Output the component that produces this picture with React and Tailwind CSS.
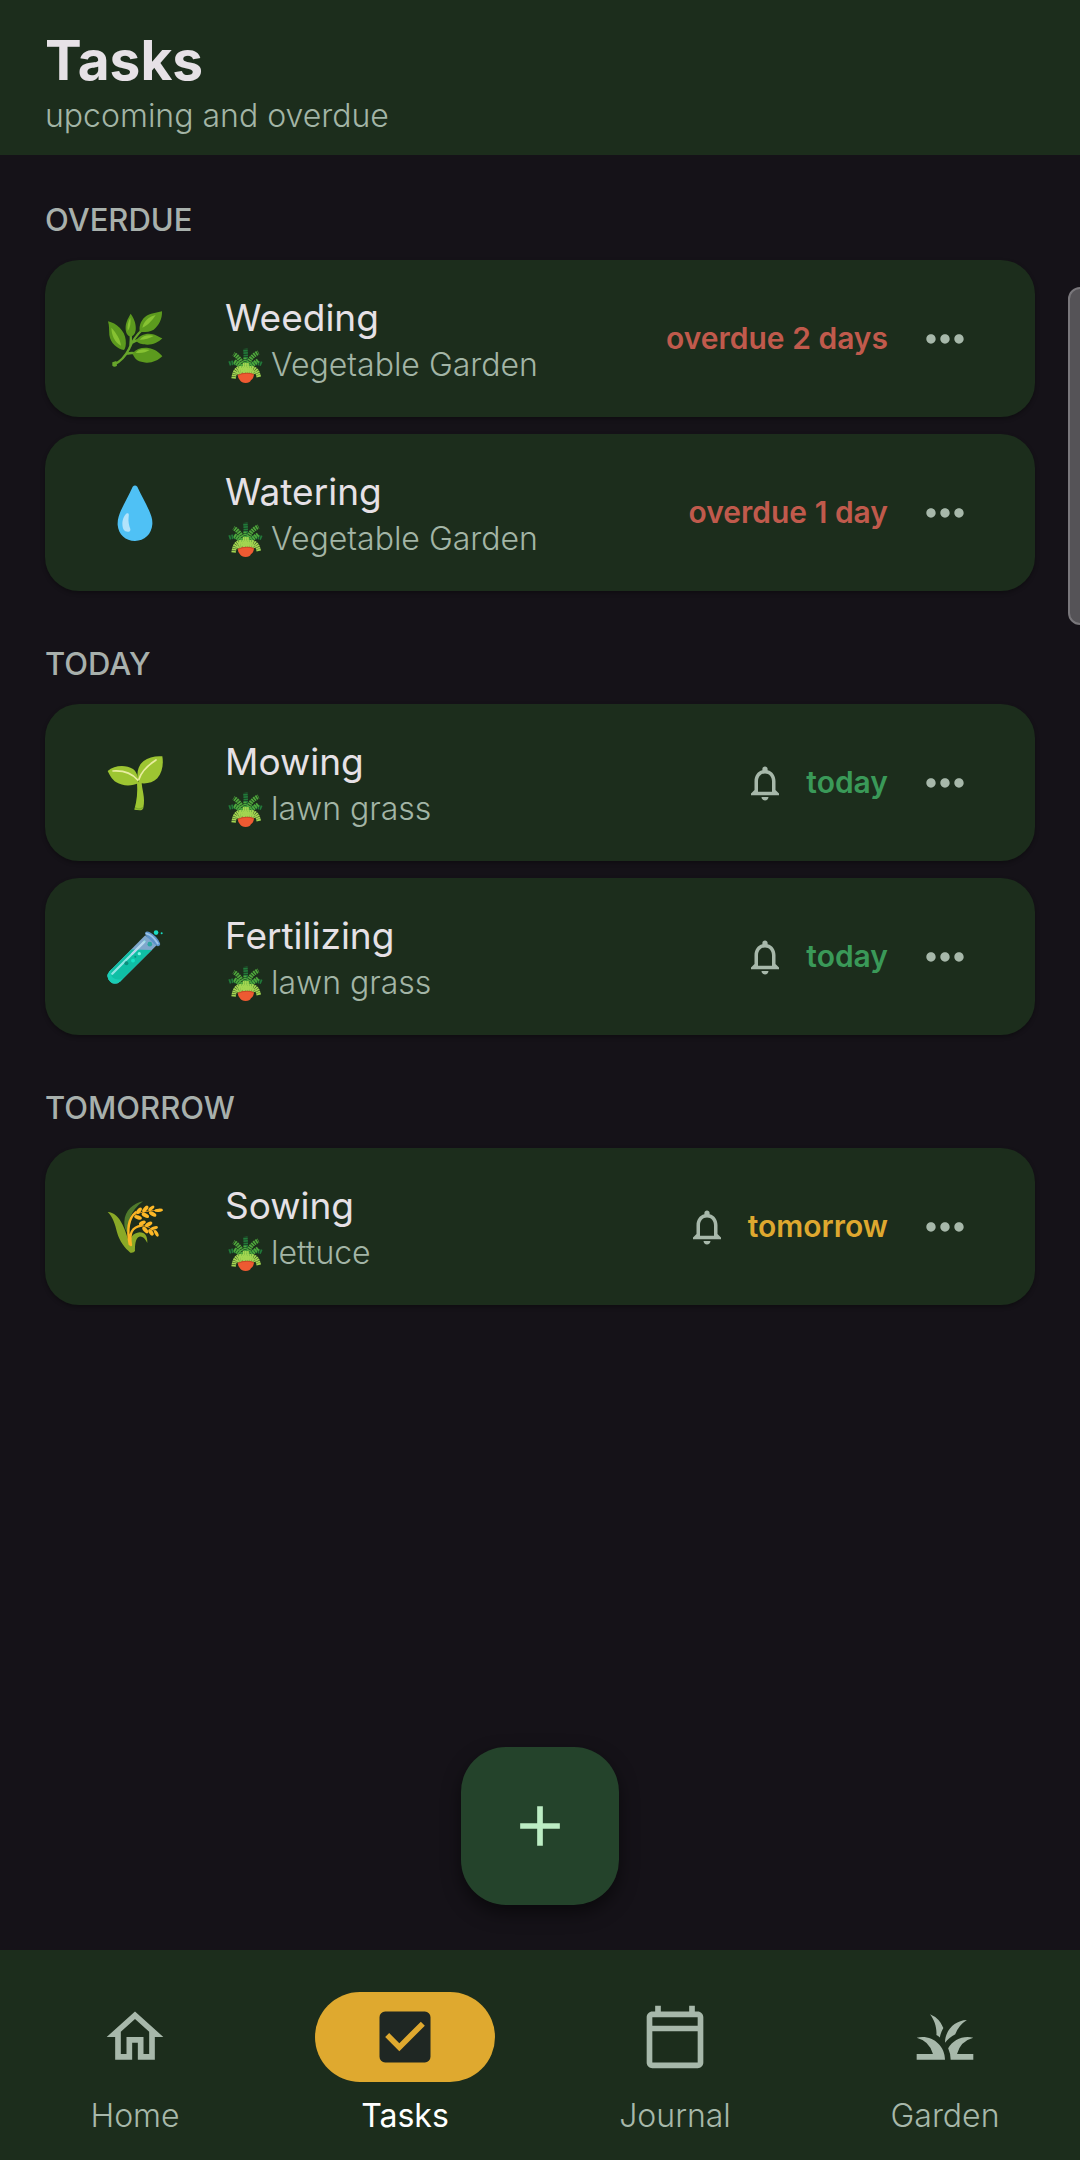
import React, { useState } from "react";
import {
  MdAdd,
  MdCheckBox,
  MdGrass,
  MdMoreHoriz,
  MdNotificationsNone,
  MdOutlineCalendarToday,
  MdOutlineHome,
} from "react-icons/md";

const sections = [
  {
    title: "OVERDUE",
    tasks: [
      { name: "Weeding", place: "Vegetable Garden", icon: "herb", due: "overdue 2 days", status: "overdue", reminder: false },
      { name: "Watering", place: "Vegetable Garden", icon: "drop", due: "overdue 1 day", status: "overdue", reminder: false },
    ],
  },
  {
    title: "TODAY",
    tasks: [
      { name: "Mowing", place: "lawn grass", icon: "sprout", due: "today", status: "today", reminder: true },
      { name: "Fertilizing", place: "lawn grass", icon: "tube", due: "today", status: "today", reminder: true },
    ],
  },
  {
    title: "TOMORROW",
    tasks: [
      { name: "Sowing", place: "lettuce", icon: "rice", due: "tomorrow", status: "tomorrow", reminder: true },
    ],
  },
];

const statusColors = {
  overdue: "text-[#c05a4c]",
  today: "text-[#3a9958]",
  tomorrow: "text-[#dea82f]",
};

const tabs = [
  { label: "Home", Icon: MdOutlineHome },
  { label: "Tasks", Icon: MdCheckBox },
  { label: "Journal", Icon: MdOutlineCalendarToday },
  { label: "Garden", Icon: MdGrass },
];

const HerbIcon = () => (
  <svg viewBox="50 34 168 168" className="size-14" aria-hidden="true">
    <path d="M72 194C94 184 106 168 116 148C126 124 138 106 158 88M112 162C122 158 132 160 142 162M128 128C138 122 144 120 150 118M120 140C122 124 122 112 121 100" fill="none" stroke="#67a52b" strokeWidth="7" strokeLinecap="round" />
    <path d="M66 188L78 184L80 198Q72 204 66 198Z" fill="#67a52b" />
    <path d="M53 65C78 70 104 94 106 120C108 136 105 146 101 151C82 148 60 132 57 106C56 90 57 78 53 65Z" fill="#5c9a1e" />
    <path d="M121 42C134 60 138 78 136 92C134 106 126 112 118 110C108 106 105 94 106 80C108 62 116 52 121 42Z" fill="#5c9a1e" />
    <path d="M215 35C216 58 206 78 190 90C176 98 162 97 149 97C145 84 150 64 164 52C180 40 198 40 215 35Z" fill="#5c9a1e" />
    <path d="M216 116C204 128 188 135 172 135C154 135 146 131 136 124C146 108 160 102 176 102C194 103 204 110 216 116Z" fill="#5c9a1e" />
    <path d="M216 170C204 182 186 190 168 189C146 188 132 180 127 161C138 148 154 143 174 145C194 148 206 158 216 170Z" fill="#5c9a1e" />
    <path d="M63 84C64 106 72 128 92 138C90 118 76 98 63 84Z" fill="#86c232" />
    <path d="M120 54C113 66 110 80 112 94C120 84 122 68 120 54Z" fill="#86c232" />
    <path d="M196 46C178 50 160 64 156 84C172 78 186 62 196 46Z" fill="#86c232" />
    <path d="M190 109C174 104 158 108 148 120C164 120 178 116 190 109Z" fill="#86c232" />
    <path d="M178 151C160 146 144 148 136 159C152 162 166 158 178 151Z" fill="#86c232" />
  </svg>
);

const DropIcon = () => (
  <svg viewBox="50 46 168 168" className="size-14" aria-hidden="true">
    <path d="M127 51Q134 44 141 51C152 76 166 98 176 122C183 138 187 150 186 164C184 194 162 214 134 214C106 214 84 194 82 166C81 150 86 136 92 122C103 98 116 76 127 51Z" fill="#4fc1f5" />
    <path d="M110 131C116 129 116 134 115 141C113 156 116 166 120 178C122 187 112 188 105 185C98 181 96 172 96 160C97 147 103 135 110 131Z" fill="#b2e3fb" />
  </svg>
);

const SproutIcon = () => (
  <svg viewBox="48 48 168 168" className="size-14" aria-hidden="true">
    <path d="M130 212C138 184 140 160 138 130L152 128C152 150 164 176 157 206Q155 214 146 214Z" fill="#9dc532" />
    <path d="M50 96C70 78 104 76 126 90C136 98 142 112 143 132C124 142 94 142 76 130C62 121 56 108 50 96Z" fill="#9dc532" />
    <path d="M141 124C136 100 142 78 158 66C172 55 194 50 214 52C218 76 214 100 199 118C186 132 162 136 146 132Z" fill="#9dc532" />
    <path d="M66 96C96 94 122 102 140 123" fill="none" stroke="#e8eda0" strokeWidth="5" strokeLinecap="round" />
    <path d="M144 121C152 94 172 78 195 63" fill="none" stroke="#e8eda0" strokeWidth="5" strokeLinecap="round" />
    <path d="M132 206Q144 214 156 206" fill="none" stroke="#7da82b" strokeWidth="4" />
  </svg>
);

const TubeIcon = () => (
  <svg viewBox="48 58 170 170" className="size-14" aria-hidden="true">
    <path d="M164 77L201 105L88 217Q72 230 58 218Q42 202 56 186Z" fill="#7fa7cc" />
    <path d="M122 120L184 122L88 217Q72 230 58 218Q42 202 56 186Z" fill="#0fbfa5" />
    <path d="M56 186Q42 202 58 218Q72 230 88 217L96 208Q78 216 66 206Q56 196 64 178Z" fill="#19cdb4" />
    <path d="M163 70Q168 63 178 68Q200 80 209 101Q211 109 202 110Q192 106 180 92Q166 80 163 70Z" fill="#5c93c9" />
    <path d="M168 72Q186 76 202 102" fill="none" stroke="#9cc4e8" strokeWidth="6" strokeLinecap="round" />
    <path d="M64 194L162 96" stroke="#8fe5e4" strokeWidth="7" strokeLinecap="round" />
    <path d="M124 134L160 98" stroke="#b8d6ef" strokeWidth="6" strokeLinecap="round" />
    <circle cx="178" cy="104" r="7" fill="#2ba79f" />
    <circle cx="107" cy="162" r="6" fill="#0c8f7d" />
    <circle cx="127" cy="154" r="6" fill="#16e2c4" />
    <circle cx="146" cy="133" r="5" fill="#7ff5e2" />
    <circle cx="134" cy="142" r="3" fill="#0c8f7d" />
    <circle cx="197" cy="69" r="7" fill="#19dcc2" />
    <circle cx="214" cy="71" r="3" fill="#19dcc2" />
  </svg>
);

const RiceIcon = () => (
  <svg viewBox="50 58 168 168" className="size-14" aria-hidden="true">
    <path d="M158 65C128 72 104 92 102 126C101 142 106 152 112 162C112 132 118 94 158 65Z" fill="#4f7a2c" />
    <path d="M52 97C70 98 86 112 96 134C106 154 112 176 118 194C118 174 128 160 148 158C164 158 172 170 171 190C162 170 150 166 142 174C134 184 134 200 134 214Q130 221 120 219C104 206 88 186 80 158C74 132 66 110 52 97Z" fill="#8aa927" />
    <path d="M118 194C110 150 112 118 136 98M122 196C116 162 124 142 154 138" fill="none" stroke="#fbb524" strokeWidth="7" strokeLinecap="round" />
    <path d="M134 104Q166 92 212 92M150 138Q178 136 200 164" fill="none" stroke="#e59a1c" strokeWidth="3" />
    <g fill="#fdb827">
      <ellipse cx="146" cy="93" rx="11" ry="6" transform="rotate(-50 146 93)" />
      <ellipse cx="165" cy="88" rx="12" ry="6" transform="rotate(-48 165 88)" />
      <ellipse cx="183" cy="86" rx="11" ry="5" transform="rotate(-40 183 86)" />
      <ellipse cx="205" cy="92" rx="13" ry="5" transform="rotate(-4 205 92)" />
      <ellipse cx="143" cy="113" rx="12" ry="6" transform="rotate(20 143 113)" />
      <ellipse cx="165" cy="107" rx="12" ry="6" transform="rotate(28 165 107)" />
      <ellipse cx="187" cy="103" rx="12" ry="6" transform="rotate(28 187 103)" />
      <ellipse cx="156" cy="130" rx="11" ry="6" transform="rotate(-28 156 130)" />
      <ellipse cx="175" cy="134" rx="12" ry="6" transform="rotate(-30 175 134)" />
      <ellipse cx="192" cy="145" rx="11" ry="5" transform="rotate(-14 192 145)" />
      <ellipse cx="165" cy="151" rx="12" ry="6" transform="rotate(50 165 151)" />
      <ellipse cx="182" cy="158" rx="11" ry="6" transform="rotate(55 182 158)" />
      <ellipse cx="198" cy="161" rx="11" ry="5" transform="rotate(62 198 161)" />
    </g>
  </svg>
);

// Small potted fern shown in front of the plant or bed name
const PotIcon = () => (
  <svg viewBox="412 159 104 104" className="size-9 shrink-0" aria-hidden="true">
    <g fill="none" stroke="#217a3a" strokeWidth="13" strokeDasharray="5 2">
      <path d="M464 228Q468 196 465 164" />
      <path d="M458 222Q444 198 418 207" />
      <path d="M472 222Q488 198 512 208" />
    </g>
    <g fill="none" stroke="#4fa83c" strokeWidth="13" strokeDasharray="5 2">
      <path d="M462 226Q454 192 431 179" />
      <path d="M468 226Q474 188 503 175" />
      <path d="M466 228Q482 212 502 198" />
      <path d="M462 228Q452 212 432 200" />
    </g>
    <path d="M464 230L464 188" stroke="#4fa83c" strokeWidth="9" strokeDasharray="4 2" />
    <g fill="none" stroke="#a3d651" strokeWidth="13" strokeDasharray="5 1">
      <path d="M464 224Q436 210 431 250" />
      <path d="M466 224Q498 210 504 247" />
      <path d="M446 226L486 226" />
      <path d="M464 234Q448 226 443 240" />
      <path d="M466 234Q484 226 490 238" />
      <path d="M458 212L476 212" />
    </g>
    <path d="M443 240Q466 230 490 238Q489 251 481 255Q478 263 466 263Q454 263 450 256Q444 252 443 240Z" fill="#ee5a32" />
    <path d="M443 241Q466 230 490 239" fill="none" stroke="#c94a26" strokeWidth="3" />
  </svg>
);

const taskIcons = {
  herb: HerbIcon,
  drop: DropIcon,
  sprout: SproutIcon,
  tube: TubeIcon,
  rice: RiceIcon,
};

const TaskCard = ({ task }) => {
  const Icon = taskIcons[task.icon];

  return (
    <li className="flex min-h-[157px] items-center rounded-[34px] bg-[#1c2d1c] px-[45px] shadow-[0_2px_4px_rgba(0,0,0,0.3)]">
      <div className="flex w-[90px] shrink-0 justify-center">
        <Icon />
      </div>
      <div className="ml-[45px] min-w-0 flex-1 pt-1">
        <h3 className="text-[37px] leading-[48px] text-[#e6e1e6]">{task.name}</h3>
        <p className="flex items-center gap-2 pl-0.5 text-[32px] leading-[46px] font-light text-[#a3b5a6]">
          <PotIcon />
          {task.place}
        </p>
      </div>
      {task.reminder && <MdNotificationsNone className="mr-5 size-[42px] shrink-0 text-[#a7b8aa]" />}
      <span className={`mr-3 text-[30px] font-semibold whitespace-nowrap ${statusColors[task.status]}`}>
        {task.due}
      </span>
      <button
        type="button"
        aria-label={`Options for ${task.name}`}
        className="flex h-[90px] w-[90px] shrink-0 items-center justify-center text-[#a7b8aa]"
      >
        <MdMoreHoriz className="size-14" />
      </button>
    </li>
  );
};

const App = () => {
  const [activeTab, setActiveTab] = useState("Tasks");

  return (
    <div className="relative flex min-h-screen flex-col overflow-x-hidden bg-[#151218] font-['Inter',sans-serif]">
      <header className="bg-[#1c2d1c] px-[45px] pt-7 pb-4">
        <h1 className="text-[55px] leading-[65px] font-bold text-[#e6e1e6]">Tasks</h1>
        <p className="text-[32px] leading-[46px] font-light text-[#a3b5a6]">upcoming and overdue</p>
      </header>

      <main className="flex flex-1 flex-col px-[45px] pt-[43px] pb-[45px]">
        <div className="flex flex-col gap-[51px]">
          {sections.map((section) => (
            <section key={section.title}>
              <h2 className="mb-[18px] text-[31px] leading-[44px] font-medium text-[#a8b0ac]">{section.title}</h2>
              <ul className="flex flex-col gap-[17px]">
                {section.tasks.map((task) => (
                  <TaskCard key={task.name} task={task} />
                ))}
              </ul>
            </section>
          ))}
        </div>

        <button
          type="button"
          aria-label="Add task"
          className="mx-auto mt-auto flex size-[158px] items-center justify-center rounded-[45px] bg-[#24432b] text-[#bcedc4] shadow-[0_8px_18px_rgba(0,0,0,0.5)]"
        >
          <MdAdd className="size-[68px]" />
        </button>
      </main>

      {/* Scroll thumb */}
      <div className="absolute top-[287px] -right-1 h-[338px] w-4 rounded-l-xl border-2 border-[#79777b] bg-[#555357]" />

      <nav className="grid grid-cols-4 bg-[#1c2d1c] pt-[42px] pb-[22px]">
        {tabs.map(({ label, Icon }) => {
          const active = label === activeTab;
          return (
            <button
              key={label}
              type="button"
              onClick={() => setActiveTab(label)}
              className={`flex flex-col items-center gap-3 ${active ? "text-white" : "text-[#a7b8aa]"}`}
            >
              <span
                className={`flex h-[90px] w-[180px] items-center justify-center rounded-full ${
                  active ? "bg-[#dfa92f] text-[#1f2723]" : ""
                }`}
              >
                <Icon className="size-[68px]" />
              </span>
              <span className={`text-[32px] leading-[44px] ${active ? "font-normal" : "font-light"}`}>{label}</span>
            </button>
          );
        })}
      </nav>
    </div>
  );
};

export default App;
